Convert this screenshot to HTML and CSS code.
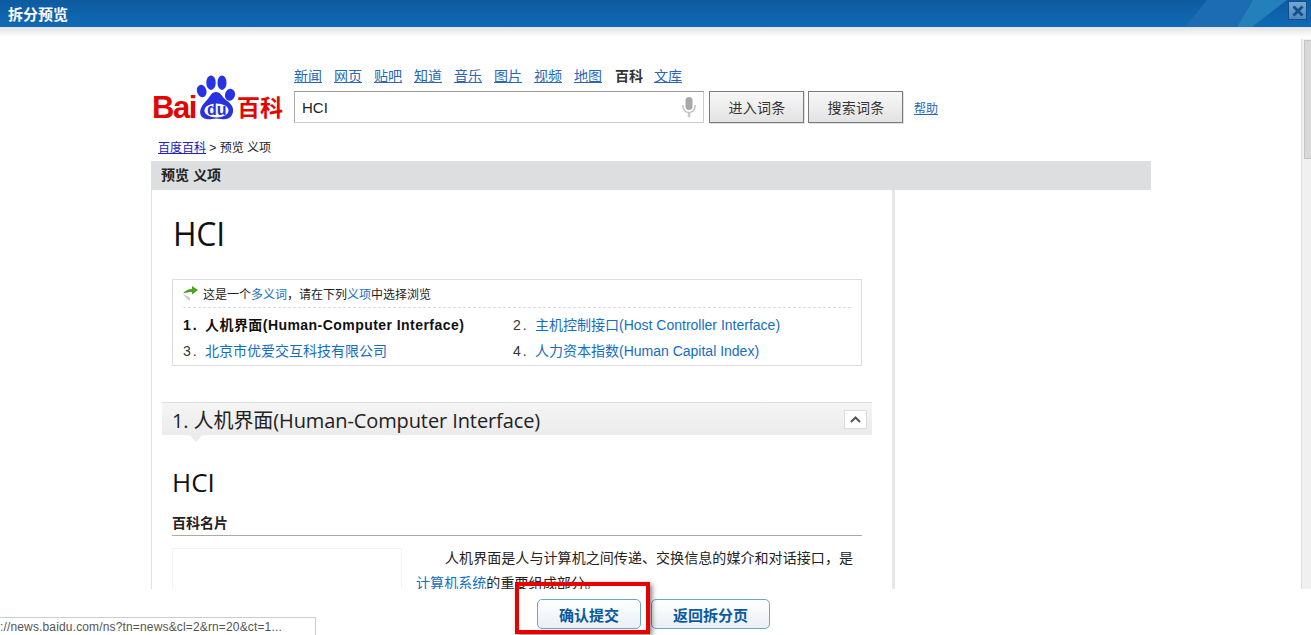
FILE: index.html
```html
<!DOCTYPE html>
<html lang="zh-CN">
<head>
    <meta charset="UTF-8">
    <title>拆分预览</title>
    <link rel="stylesheet" href="styles.css">
</head>
<body>
    <div class="titlebar">
        <svg class="titlebar-art" width="130" height="27" viewBox="0 0 130 27">
            <polygon points="4,27 26,0 72,0 56,27" fill="#1c6cb3"/>
            <polygon points="56,27 72,0 106,0 71,27" fill="#2380bb"/>
        </svg>
        <span class="titlebar-text">拆分预览</span>
        <span class="close-btn">
            <svg width="14" height="14" viewBox="0 0 14 14"><path d="M2.500 2.500l9 9M11.500 2.500l-9 9" stroke="#0f4f8c" stroke-width="2.800" fill="none"/></svg>
        </span>
    </div>

    <div class="frame">
        <div class="page">
            <div class="header">
                <div class="logo">
                    <span class="logo-bai">Bai</span>
                    <span class="logo-paw">
                        <svg width="41" height="48" viewBox="0 0 41 48">
                            <ellipse cx="5.700" cy="16" rx="4.700" ry="6.300" fill="#2932e1" transform="rotate(-15 5.700 16)"/>
                            <ellipse cx="15" cy="7.700" rx="4.700" ry="7.300" fill="#2932e1"/>
                            <ellipse cx="26" cy="7.700" rx="4.500" ry="7.300" fill="#2932e1"/>
                            <ellipse cx="34" cy="19.700" rx="5" ry="6" fill="#2932e1" transform="rotate(15 34 19.700)"/>
                            <path d="M20 17c5 0 6 5 10 8 6 4 9 9 6 15-2 4-7 5-11 4-3-.8-6-.8-9 0-4 1-10 0-11.500-4.500C3 34 7 29 11 25c3-3 4-8 9-8z" fill="#2932e1"/>
                            <ellipse cx="20.500" cy="35.500" rx="12" ry="7" fill="white"/>
                        </svg>
                        <span class="logo-du">du</span>
                    </span>
                    <span class="logo-cn">百科</span>
                </div>
                <div class="search">
                    <div class="nav">
                        <a href="#">新闻</a>
                        <a href="#">网页</a>
                        <a href="#">贴吧</a>
                        <a href="#">知道</a>
                        <a href="#">音乐</a>
                        <a href="#">图片</a>
                        <a href="#">视频</a>
                        <a href="#">地图</a>
                        <b>百科</b>
                        <a href="#">文库</a>
                    </div>
                    <div class="search-row">
                        <div class="search-input">
                            <span>HCI</span>
                            <svg width="14" height="20" viewBox="0 0 14 20">
                                <rect x="3.500" y="0" width="7" height="13" rx="3.500" fill="#a8a8a8"/>
                                <path d="M1 8v1.500a6 6 0 0 0 12 0V8" stroke="#c4c4c4" stroke-width="1.600" fill="none"/>
                                <path d="M7 15v5" stroke="#c4c4c4" stroke-width="2.400"/>
                            </svg>
                        </div>
                        <button class="search-btn">进入词条</button>
                        <button class="search-btn">搜索词条</button>
                        <a class="help" href="#">帮助</a>
                    </div>
                </div>
            </div>

            <div class="crumb"><a href="#">百度百科</a> &gt; 预览 义项</div>
            <div class="bar">预览 义项</div>

            <div class="card">
                <h1 class="entry-title">HCI</h1>

                <div class="poly">
                    <div class="poly-head">
                        <svg width="16" height="15" viewBox="0 0 16 15">
                            <path d="M0 7.500C2 4.500 5 3 9 3V0l6 4-6 4.500V6C6 6 3.500 6.500 0 7.500z" fill="#4aa51c"/>
                            <path d="M0 8l7 3.500V15C4 13 2 11 0 8z" fill="#cccccc"/>
                        </svg>
                        <span>这是一个<a href="#">多义词</a>，请在下列<a href="#">义项</a>中选择浏览</span>
                    </div>
                    <ul class="poly-list">
                        <li class="current"><i>1.</i>人机界面(Human-Computer Interface)</li>
                        <li><i>2.</i><a href="#">主机控制接口(Host Controller Interface)</a></li>
                        <li><i>3.</i><a href="#">北京市优爱交互科技有限公司</a></li>
                        <li><i>4.</i><a href="#">人力资本指数(Human Capital Index)</a></li>
                    </ul>
                </div>

                <div class="section-head">
                    <span>1. 人机界面(Human-Computer Interface)</span>
                    <span class="collapse-btn">
                        <svg width="11" height="7" viewBox="0 0 11 7"><path d="M1 6l4.500-4.500L10 6" stroke="#555" stroke-width="2" fill="none"/></svg>
                    </span>
                </div>

                <h2 class="sub-title">HCI</h2>
                <div class="card-name">百科名片</div>
                <div class="summary">
                    <div class="photo"></div>
                    <p>人机界面是人与计算机之间传递、交换信息的媒介和对话接口，是<a href="#">计算机系统</a>的重要组成部分。</p>
                </div>
            </div>
        </div>
        <div class="scrollbar"><div class="scroll-thumb"></div></div>
    </div>

    <div class="footer">
        <button class="foot-btn confirm">确认提交</button>
        <button class="foot-btn back">返回拆分页</button>
    </div>

    <div class="highlight"></div>
    <div class="status">://news.baidu.com/ns?tn=news&amp;cl=2&amp;rn=20&amp;ct=1...</div>
</body>
</html>
```

FILE: styles.css
```css
html, body {
    margin: 0;
    padding: 0;
    height: 635px;
    overflow: hidden;
}

body {
    font-family: "Liberation Sans", "Noto Sans CJK SC", sans-serif;
    font-size: 14px;
    color: #333;
    background: white;
    position: relative;
}

a {
    color: #136ec2;
    text-decoration: none;
}

.titlebar {
    height: 27px;
    display: flex;
    align-items: center;
    justify-content: space-between;
    padding: 0 4px 0 8px;
    background: linear-gradient(#0d5b9f, #106ab6);
    position: relative;
    overflow: hidden;
}

.titlebar-art {
    position: absolute;
    left: 1181px;
    top: 0;
}

.titlebar-text {
    color: white;
    font-size: 15px;
    font-weight: bold;
    position: relative;
}

.close-btn {
    width: 17px;
    height: 17px;
    display: flex;
    align-items: center;
    justify-content: center;
    background: linear-gradient(#7aa6d0, #4f88bd);
    border: 1px solid #0f4f8c;
    position: relative;
    margin-bottom: 6px;
}

.frame {
    height: 562px;
    display: flex;
    justify-content: space-between;
    overflow: hidden;
    background: linear-gradient(#e2e2e2, white 10px);
}

.page {
    width: 1000px;
    margin-left: 151px;
    padding-top: 48px;
}

.header {
    display: flex;
    height: 48px;
}

.logo {
    width: 143px;
    height: 48px;
    display: flex;
    align-items: flex-end;
}

.logo-bai {
    width: 44px;
    flex-shrink: 0;
    color: #e10601;
    font-size: 31px;
    font-weight: bold;
    line-height: 32px;
    letter-spacing: -1.500px;
    margin-left: 1px;
    margin-bottom: -1px;
}

.logo-paw {
    width: 41px;
    height: 48px;
    position: relative;
    flex-shrink: 0;
}

.logo-du {
    position: absolute;
    left: 11px;
    top: 26px;
    color: #2932e1;
    font-size: 16px;
    font-weight: bold;
    line-height: 18px;
}

.logo-cn {
    color: #e10601;
    font-size: 23px;
    font-weight: bold;
    line-height: 26px;
    margin-bottom: 2px;
    white-space: nowrap;
}

.search {
    margin-top: -12px;
}

.nav {
    display: flex;
    gap: 12px;
    height: 23px;
    align-items: center;
    font-size: 14px;
}

.nav a {
    text-decoration: underline;
    color: #2a66b5;
}

.nav b {
    margin-left: 1px;
    margin-right: -1px;
    color: #333;
}

.search-row {
    display: flex;
    align-items: center;
    margin-top: 5px;
}

.search-input {
    width: 410px;
    height: 32px;
    box-sizing: border-box;
    display: flex;
    align-items: center;
    justify-content: space-between;
    padding: 0 7px;
    border: 1px solid #ccc;
    border-top-color: #999;
    border-left-color: #aaa;
    font-size: 15px;
    color: #222;
}

.search-btn {
    width: 95px;
    height: 32px;
    padding: 0 0 0 1px;
    margin-left: 5px;
    border: 1px solid #7b7b7b;
    background: linear-gradient(#f7f7f7, #e3e3e3);
    box-shadow: 1px 1px 0 #e0e0e0;
    font-family: inherit;
    font-size: 14px;
    letter-spacing: 0.3px;
    color: #333;
}

.search-btn + .search-btn {
    margin-left: 4px;
}

.help {
    margin-left: 11px;
    font-size: 12px;
    color: #2a66b5;
    text-decoration: underline;
}

.crumb {
    margin-top: 16px;
    padding-left: 7px;
    height: 22px;
    line-height: 18px;
    font-size: 12px;
    color: #222;
}

.crumb a {
    color: #2020c8;
    text-decoration: underline;
}

.bar {
    height: 29px;
    line-height: 29px;
    padding-left: 10px;
    background: #dddee0;
    font-size: 14px;
    font-weight: bold;
    color: #222;
}

.card {
    width: 744px;
    height: 400px;
    box-sizing: border-box;
    border-left: 1px solid #e2e2e2;
    border-right: 3px solid #e6e6e6;
    padding: 0 20px;
    overflow: hidden;
}

.entry-title {
    margin: 22px 0 0 1px;
    font-family: "Open Sans", "Noto Sans CJK SC", sans-serif;
    font-size: 32px;
    line-height: 44px;
    letter-spacing: -0.3px;
    font-weight: normal;
    color: #111;
}

.poly {
    width: 690px;
    height: 87px;
    box-sizing: border-box;
    margin-top: 23px;
    padding: 0 10px;
    border: 1px solid #ddd;
    font-size: 12px;
    color: #222;
}

.poly-head {
    height: 27px;
    display: flex;
    align-items: center;
    gap: 4px;
    border-bottom: 1px dashed #ddd;
}

.poly-list {
    list-style: none;
    margin: 4px 0 0;
    padding: 0;
    display: grid;
    grid-template-columns: 330px 1fr;
    font-size: 14px;
    line-height: 26px;
}

.poly-list i {
    font-style: normal;
    display: inline-block;
    width: 22px;
    letter-spacing: 2px;
    color: #333;
}

.poly-list .current {
    font-weight: bold;
    letter-spacing: 0.45px;
    color: #111;
}

.poly-list .current i {
    color: #111;
}

.section-head {
    width: 710px;
    height: 33px;
    box-sizing: border-box;
    margin: 36px 0 0 -10px;
    padding: 0 5px 0 10px;
    display: flex;
    align-items: center;
    justify-content: space-between;
    border-top: 1px solid #ddd;
    background: linear-gradient(#f5f5f5, #ebebeb);
    font-family: "Open Sans", "Noto Sans CJK SC", sans-serif;
    font-size: 20px;
    letter-spacing: -0.1px;
    color: #222;
    position: relative;
}

.section-head::after {
    content: "";
    position: absolute;
    left: 27px;
    top: 32px;
    border: 7px solid transparent;
    border-top-color: #ececec;
}

.collapse-btn {
    width: 21px;
    height: 17px;
    display: flex;
    align-items: center;
    justify-content: center;
    background: white;
    border: 1px solid #ddd;
}

.sub-title {
    margin: 31px 0 0;
    font-family: "Open Sans", "Noto Sans CJK SC", sans-serif;
    font-size: 26px;
    line-height: 32px;
    font-weight: normal;
    color: #111;
}

.card-name {
    margin-top: 15px;
    padding-bottom: 2px;
    border-bottom: 1px solid #aaa;
    width: 690px;
    line-height: 20px;
    font-weight: bold;
    color: #222;
}

.summary {
    display: flex;
    width: 690px;
    margin-top: 12px;
    gap: 14px;
}

.photo {
    width: 228px;
    height: 200px;
    flex-shrink: 0;
    border: 1px solid #f3f3f3;
}

.summary p {
    margin: -2px 0 0;
    width: 442px;
    flex-shrink: 0;
    line-height: 25px;
    text-indent: 29px;
    letter-spacing: 0.07px;
    color: #222;
}

.scrollbar {
    width: 10px;
    margin-top: 12px;
    background: #f0f0f0;
    border-left: 1px solid #ddd;
    box-sizing: border-box;
}

.scroll-thumb {
    height: 117px;
    margin: 1px 0 0 2px;
    background: #d8d8d8;
    border: 1px solid #c4c4c4;
    border-right: 0;
}

.footer {
    height: 46px;
    display: flex;
    justify-content: center;
    align-items: flex-start;
    gap: 10px;
    padding: 10px 4px 0 0;
    box-sizing: border-box;
    background: white;
    position: relative;
}

.foot-btn {
    height: 30px;
    padding: 0;
    border: 1px solid #6fa3c7;
    border-radius: 5px;
    background: linear-gradient(#ffffff, #e9eff5);
    font-family: inherit;
    font-size: 15px;
    font-weight: bold;
    color: #0b5a9e;
}

.confirm {
    width: 104px;
}

.back {
    width: 119px;
}

/* red annotation drawn on top of the screenshot */
.highlight {
    position: absolute;
    left: 515px;
    top: 582px;
    width: 127px;
    height: 44px;
    border: 4px solid #e60000;
    box-shadow: 2px 2px 5px rgba(0,0,0,0.5);
}

.status {
    position: absolute;
    left: 0;
    top: 617px;
    width: 316px;
    height: 18px;
    box-sizing: border-box;
    border: 1px solid #ccc;
    border-left: 0;
    border-bottom: 0;
    background: white;
    font-size: 12px;
    letter-spacing: 0.15px;
    line-height: 19px;
    color: #555;
    white-space: nowrap;
}
```
